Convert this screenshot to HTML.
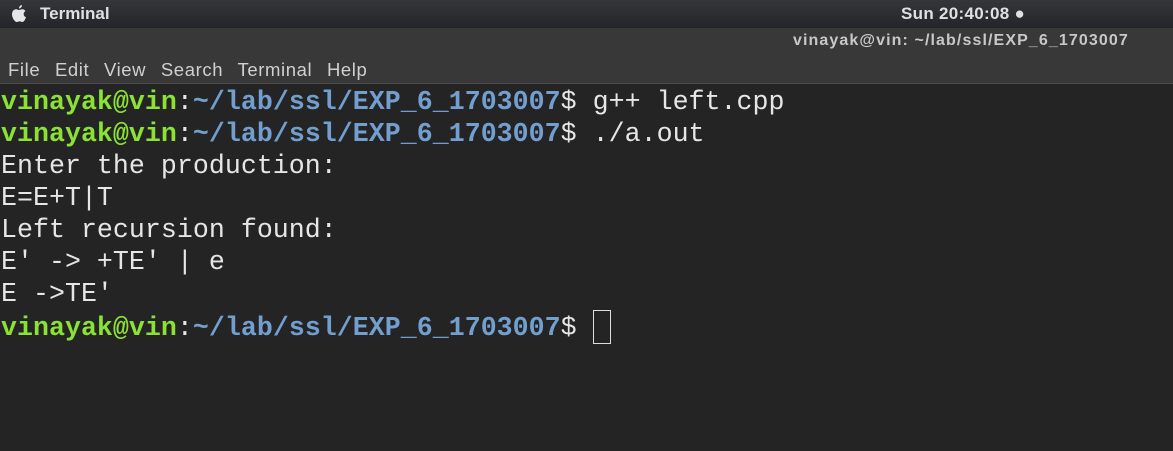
<!DOCTYPE html>
<html><head><style>
body{margin:0;width:1173px;height:451px;background:#242424;overflow:hidden;position:relative;font-family:"Liberation Sans",sans-serif}
#top{position:absolute;left:0;top:0;width:1173px;height:28px;background:linear-gradient(#35363a,#24252a);}
#top .t{position:absolute;left:40px;top:4px;color:#e0e0e0;font-weight:bold;font-size:17px}
#top .c{position:absolute;left:901px;top:4px;color:#e0e0e0;font-weight:bold;font-size:17px;letter-spacing:0.3px}
#hdr{position:absolute;left:0;top:28px;width:1173px;height:55px;background:#383838;border-bottom:1px solid #4a4a4a}
#hdr .ti{position:absolute;left:793px;top:4px;color:#c8c8c8;font-weight:bold;font-size:16px;letter-spacing:1.1px}
#hdr .m{position:absolute;left:8px;top:31px;color:#d0d0d0;font-size:18.5px;word-spacing:9px;letter-spacing:0.6px}
#term{position:absolute;left:1px;top:86px;font-family:"Liberation Mono","DejaVu Sans Mono",monospace;font-size:26.6px;letter-spacing:0.03px;line-height:32px;color:#e6e6e6;white-space:pre}
.g{color:#8ae234;font-weight:bold}.b{color:#729fcf;font-weight:bold}
.cur{display:inline-block;width:18px;height:34px;border:1.5px solid #ddd;vertical-align:-9px;box-sizing:border-box}
</style></head><body>
<div id="top"><svg style="position:absolute;left:11px;top:5px" width="16" height="18" viewBox="0 0 16 18"><path fill="#e6e6e6" d="M11 0c0 2-1.5 3.5-3 3.5 0-2 1.5-3.5 3-3.5zM8 5c1-.2 2-.8 3.2-.8 1.5 0 2.7.8 3.3 1.8-2.8 1.6-2.2 5.3.5 6.3-.7 2-2 4.7-3.6 4.7-1 0-1.5-.6-2.8-.6s-1.8.6-2.9.6C4 17 1 13 1 9.5 1 6 3.2 4.3 5 4.3c1.2 0 2 .7 3 .7z"/></svg><span class="t">Terminal</span><span class="c">Sun 20:40:08 ●</span></div>
<div id="hdr"><span class="ti">vinayak@vin: ~/lab/ssl/EXP_6_1703007</span><span class="m">File  Edit  View  Search  Terminal  Help</span></div>
<div id="term"><span class="g">vinayak@vin</span>:<span class="b">~/lab/ssl/EXP_6_1703007</span>$ g++ left.cpp
<span class="g">vinayak@vin</span>:<span class="b">~/lab/ssl/EXP_6_1703007</span>$ ./a.out
Enter the production:
E=E+T|T
Left recursion found:
E' -> +TE' | e
E ->TE'
<span class="g">vinayak@vin</span>:<span class="b">~/lab/ssl/EXP_6_1703007</span>$ <span class="cur"></span></div>
</body></html>
